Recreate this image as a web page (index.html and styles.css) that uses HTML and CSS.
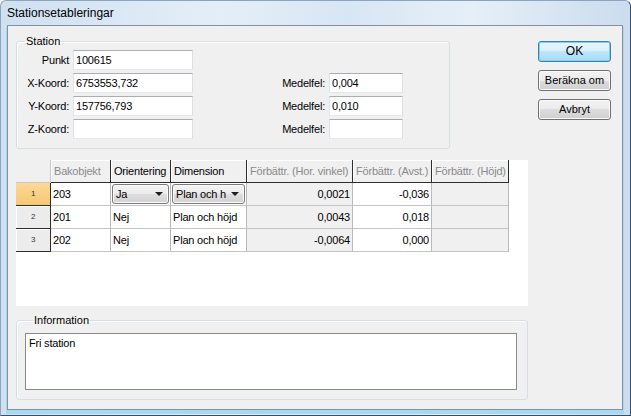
FILE: index.html
```html
<!DOCTYPE html>
<html>
<head>
<meta charset="utf-8">
<link rel="stylesheet" href="styles.css">
</head>
<body>
<div class="window">
  <div class="titlebar">Stationsetableringar</div>
  <div class="client">
    <div class="main">
      <fieldset class="group station">
        <legend>Station</legend>
        <div class="form">
          <div class="lbl">Punkt</div>
          <div class="field">100615</div>
          <div></div>
          <div></div>

          <div class="lbl">X-Koord:</div>
          <div class="field">6753553,732</div>
          <div class="lbl">Medelfel:</div>
          <div class="field">0,004</div>

          <div class="lbl">Y-Koord:</div>
          <div class="field">157756,793</div>
          <div class="lbl">Medelfel:</div>
          <div class="field">0,010</div>

          <div class="lbl">Z-Koord:</div>
          <div class="field"></div>
          <div class="lbl">Medelfel:</div>
          <div class="field"></div>
        </div>
      </fieldset>

      <div class="gridwrap">
        <div class="grid">
          <div class="corner"></div>
          <div class="hd dim">Bakobjekt</div>
          <div class="hd">Orientering</div>
          <div class="hd">Dimension</div>
          <div class="hd dim">Förbättr. (Hor. vinkel)</div>
          <div class="hd dim">Förbättr. (Avst.)</div>
          <div class="hd dim">Förbättr. (Höjd)</div>

          <div class="rh sel">1</div>
          <div class="cell">203</div>
          <div class="cell cc"><div class="combo"><span>Ja</span><i class="arrow"></i></div></div>
          <div class="cell cc"><div class="combo"><span>Plan och h</span><i class="arrow"></i></div></div>
          <div class="cell ro num">0,0021</div>
          <div class="cell num">-0,036</div>
          <div class="cell ro"></div>

          <div class="rh">2</div>
          <div class="cell">201</div>
          <div class="cell">Nej</div>
          <div class="cell">Plan och höjd</div>
          <div class="cell ro num">0,0043</div>
          <div class="cell num">0,018</div>
          <div class="cell ro"></div>

          <div class="rh">3</div>
          <div class="cell">202</div>
          <div class="cell">Nej</div>
          <div class="cell">Plan och höjd</div>
          <div class="cell ro num">-0,0064</div>
          <div class="cell num">0,000</div>
          <div class="cell ro"></div>
        </div>
      </div>

      <fieldset class="group info">
        <legend>Information</legend>
        <div class="memo">Fri station</div>
      </fieldset>
    </div>

    <div class="buttons">
      <div class="btn default">OK</div>
      <div class="btn">Beräkna om</div>
      <div class="btn">Avbryt</div>
    </div>
  </div>
</div>
</body>
</html>
```

FILE: styles.css
```css
* { box-sizing: border-box; }

html, body {
  margin: 0;
  padding: 0;
  width: 631px;
  height: 416px;
  overflow: hidden;
  background: #ffffff;
}

body {
  font-family: "Liberation Sans", Arial, sans-serif;
  font-size: 11px;
  color: #000;
}

.window {
  width: 631px;
  height: 416px;
  border: 1px solid #8ca5bf;
  border-right-color: #34506c;
  border-bottom-color: #34506c;
  border-radius: 6px 6px 0 0;
  background: linear-gradient(to right, #cfe0f1 0%, #e4eef8 35%, #d7e6f4 55%, #e6eff8 75%, #cadcee 100%);
  display: flex;
  flex-direction: column;
}

.titlebar {
  height: 24px;
  line-height: 24px;
  padding-left: 6px;
  font-size: 12px;
  color: #000;
}

.client {
  margin: 0 7px 0 6px;
  width: 616px;
  height: 385px;
  border: 1px solid #8391a1;
  background: #f0f0f0;
  display: flex;
  box-shadow: 0 3px 0 1px #a9d8f0;
}

.main {
  width: 520px;
  padding: 9px 0 0 8px;
  display: flex;
  flex-direction: column;
}

.group {
  margin: 0;
  border: 1px solid #d5dfe5;
  border-radius: 3px;
  padding: 0;
  min-width: 0;
  box-shadow: inset 1px 1px 0 #fff;
}

.group legend {
  margin-left: 8px;
  padding: 0 1px;
  line-height: 13px;
  height: 13px;
  font-size: 11px;
}

.station {
  width: 434px;
  padding: 2px 0 9px 0;
}

.form {
  display: grid;
  grid-template-columns: 52px 120px 128px 74px;
  grid-auto-rows: 20px;
  column-gap: 4px;
  row-gap: 3px;
  letter-spacing: -0.2px;
}

.lbl {
  text-align: right;
  line-height: 20px;
}

.field {
  background: #fff;
  border: 1px solid;
  border-color: #abadb3 #dbdfe6 #e3e9ef #e2e3ea;
  padding-left: 2px;
  line-height: 18px;
}

.gridwrap {
  margin-top: 11px;
  width: 512px;
  height: 146px;
  background: #fff;
}

.grid {
  display: grid;
  grid-template-columns: 35px 60px 60px 76px 106px 79px 77px;
  grid-auto-rows: 23px;
  letter-spacing: -0.2px;
}

.corner {
  background: #f0f0f0;
  border-right: 1px solid #c8c8c8;
  border-bottom: 1px solid #c8c8c8;
}

.hd {
  background: #f0f0f0;
  border-right: 1px solid #2e2e2e;
  border-bottom: 1px solid #2e2e2e;
  box-shadow: inset 1px 1px 0 #fff;
  padding-left: 3px;
  line-height: 22px;
  white-space: nowrap;
  overflow: hidden;
}

.hd.dim { color: #8a8a8a; }

.rh {
  background: #ececec;
  border-right: 1px solid #2e2e2e;
  border-bottom: 1px solid #2e2e2e;
  box-shadow: inset 1px 1px 0 #fff;
  text-align: center;
  font-size: 8px;
  line-height: 22px;
  color: #333;
}

.rh.sel {
  background: linear-gradient(#fbd996, #f6c774);
  box-shadow: none;
}

.cell {
  background: #fff;
  border-right: 1px solid #b9b9b9;
  border-bottom: 1px solid #c4c4c4;
  padding: 0 2px;
  line-height: 22px;
  white-space: nowrap;
  overflow: hidden;
}

.cell.ro { background: #f0f0f0; }
.cell.num { text-align: right; }

.cell.cc { padding: 1px 1px 0 1px; }

.combo {
  height: 20px;
  border: 1px solid #7a7a7a;
  border-radius: 3px;
  background: linear-gradient(#f4f4f4 0%, #ebebeb 50%, #dedede 50%, #d2d2d2 100%);
  box-shadow: inset 0 0 0 1px #fbfbfb;
  display: flex;
  align-items: center;
  justify-content: space-between;
  padding: 0 5px 0 3px;
  line-height: 18px;
}

.arrow {
  width: 0;
  height: 0;
  border-left: 4px solid transparent;
  border-right: 4px solid transparent;
  border-top: 4px solid #1e1e1e;
}

.info {
  margin-top: 8px;
  width: 512px;
  padding: 6px 10px 9px 8px;
}

.memo {
  height: 57px;
  background: #fff;
  border: 1px solid #8a8a8a;
  padding: 3px 3px;
  line-height: 13px;
  letter-spacing: -0.2px;
}

.buttons {
  margin-left: 10px;
  padding-top: 15px;
  display: flex;
  flex-direction: column;
  gap: 8px;
}

.btn {
  width: 73px;
  height: 21px;
  border: 1px solid #707070;
  border-radius: 3px;
  background: linear-gradient(#f2f2f2 0%, #ebebeb 50%, #dddddd 50%, #cfcfcf 100%);
  box-shadow: inset 0 0 0 1px #fbfbfb;
  text-align: center;
  line-height: 19px;
  font-size: 11px;
}

.btn.default {
  border-color: #3c7fb1;
  background: linear-gradient(#eaf6fd 0%, #d9f0fc 50%, #bee6fd 50%, #a7d9f5 100%);
  box-shadow: inset 0 0 0 1px #7fd2f5;
  font-size: 12px;
}
```
